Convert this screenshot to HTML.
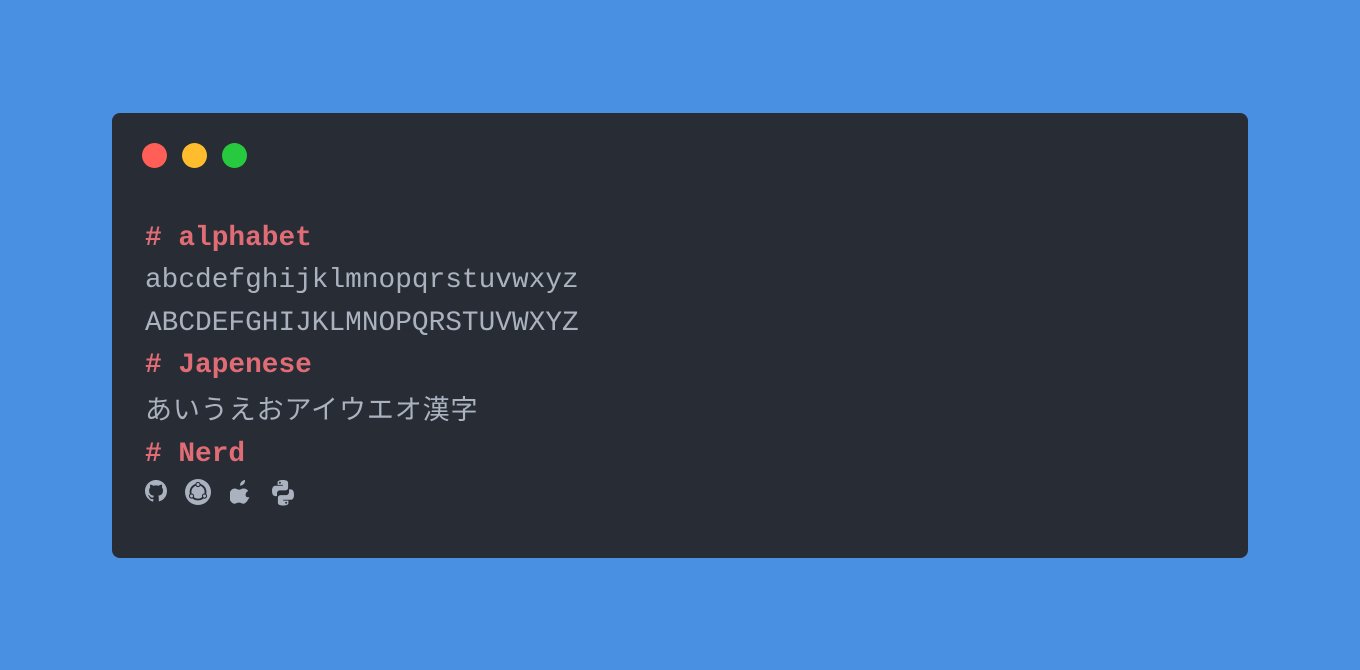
<!DOCTYPE html>
<html><head><meta charset="utf-8"><style>
html,body{margin:0;padding:0}
body{width:1360px;height:670px;background:#4a90e2;position:relative;overflow:hidden}
.card{position:absolute;left:112px;top:113px;width:1136px;height:445px;background:#282c34;border-radius:8px}
.dot{position:absolute;top:143px;width:25px;height:25px;border-radius:50%}
.code{position:absolute;left:145px;top:218px;font-family:"Liberation Mono","Noto Sans CJK JP",monospace;font-size:27.8px;line-height:42.3px;color:#abb2bf;white-space:pre}
.h{color:#e06c75;font-weight:bold}
.jp{font-family:"Noto Sans CJK JP",sans-serif;font-size:27px;letter-spacing:0.9px}
.icons{position:absolute;top:479px;left:144px}
.icons svg{position:absolute;top:0}
</style></head><body>
<div class="card"></div>
<div class="dot" style="left:142px;background:#ff5f56"></div>
<div class="dot" style="left:182px;background:#ffbd2e"></div>
<div class="dot" style="left:222px;background:#27c93f"></div>
<div class="code"><span class="h"># alphabet</span>
abcdefghijklmnopqrstuvwxyz
ABCDEFGHIJKLMNOPQRSTUVWXYZ
<span class="h"># Japenese</span>
<span class="jp">あいうえおアイウエオ漢字</span>
<span class="h"># Nerd</span></div>
<div class="icons">
<svg style="left:0" width="24" height="26" viewBox="0 0 24 26"><path fill="#abb2bf" d="M12 1C5.9 1 1 5.9 1 12c0 4.9 3.2 9 7.5 10.5.6.1.8-.2.8-.5v-2c-3.1.7-3.7-1.4-3.7-1.4-.5-1.3-1.2-1.6-1.2-1.6-1-.7.1-.7.1-.7 1.1.1 1.7 1.1 1.7 1.1 1 1.7 2.6 1.2 3.2.9.1-.7.4-1.2.7-1.5-2.5-.3-5-1.200-5-5.400 0-1.200.4-2.200 1.100-2.900-.1-.3-.5-1.400.1-2.900 0 0 .9-.3 3 1.100a10.400 10.400 0 0 1 5.500 0c2.100-1.400 3-1.100 3-1.100.6 1.500.2 2.600.1 2.900.7.8 1.100 1.700 1.100 2.900 0 4.200-2.600 5.100-5 5.400.4.3.8 1 .8 2v3c0 .3.2.6.8.5C19.800 21 23 16.900 23 12 23 5.900 18.100 1 12 1z"/></svg>
<svg style="left:40px" width="28" height="28" viewBox="0 0 28 28"><circle cx="14" cy="13" r="13" fill="#abb2bf"/><circle cx="14" cy="13" r="7.5" fill="none" stroke="#282c34" stroke-width="1.8"/><circle cx="14" cy="5.5" r="2.6" fill="#282c34"/><circle cx="7.5" cy="17" r="2.6" fill="#282c34"/><circle cx="20.5" cy="17" r="2.6" fill="#282c34"/><circle cx="14" cy="5.5" r="1.5" fill="#abb2bf"/><circle cx="7.5" cy="17" r="1.5" fill="#abb2bf"/><circle cx="20.5" cy="17" r="1.5" fill="#abb2bf"/></svg>
<svg style="left:86px" width="22" height="26" viewBox="0 0 22 26"><path fill="#abb2bf" d="M15 1c.2 1.5-.4 3-1.3 4s-2.3 1.7-3.6 1.6c-.2-1.4.5-2.9 1.3-3.8C12.3 1.8 13.8 1.1 15 1zM19.5 18c-.6 1.3-.9 1.9-1.7 3.1-1.1 1.6-2.6 3.6-4.5 3.6-1.7 0-2.1-1.1-4.4-1.1s-2.8 1.1-4.5 1.1c-1.9 0-3.3-1.8-4.4-3.4C-2 17.2-.3 9.7 4.6 9.5c1.8 0 3 1.2 4.5 1.2s2.5-1.2 4.7-1.2c1.6 0 3.3.9 4.4 2.4-3.9 2.1-3.3 7.7 1.3 6.1z"/></svg>
<svg style="left:125px" width="28" height="28" viewBox="0 0 28 28"><path fill="#abb2bf" d="M13.8 1c-5.5 0-5.2 2.4-5.2 2.4v2.5h5.3v.8H6.5S3 6.3 3 11.8s3.1 5.3 3.1 5.3H8v-2.6s-.1-3.1 3-3.1h5.2s2.9 0 2.9-2.8V3.9S19.6 1 13.8 1zm-2.9 1.7a1 1 0 1 1 0 2 1 1 0 0 1 0-2z"/><path fill="#abb2bf" d="M14.2 26.5c5.5 0 5.2-2.4 5.2-2.4v-2.5h-5.3v-.8h7.4S25 21.2 25 15.7s-3.1-5.3-3.1-5.3H20V13s.1 3.1-3 3.1h-5.2s-2.9 0-2.9 2.8v4.7S8.4 26.5 14.2 26.5zm2.9-1.7a1 1 0 1 1 0-2 1 1 0 0 1 0 2z"/></svg>
</div>
</body></html>
